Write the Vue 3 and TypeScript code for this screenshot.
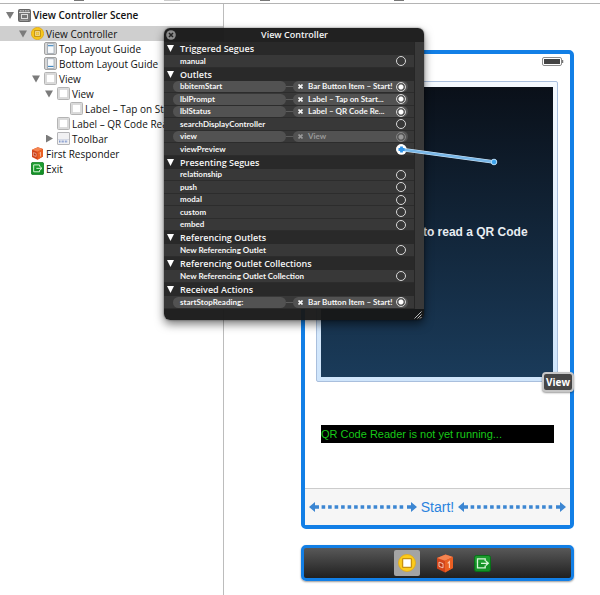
<script setup lang="ts">
type IconName = 'scene' | 'controller' | 'top' | 'bottom' | 'view' | 'toolbar' | 'responder' | 'exit'

interface TreeNode {
  label: string
  icon: IconName
  level: number
  arrow?: 'open' | 'closed'
  selected?: boolean
}

interface Connection {
  name: string
  target?: string
  dimmed?: boolean
  dragging?: boolean
}

interface Section {
  title: string
  items: Connection[]
}

const nodes: TreeNode[] = [
  { label: 'View Controller Scene', icon: 'scene', level: 0, arrow: 'open' },
  { label: 'View Controller', icon: 'controller', level: 1, arrow: 'open', selected: true },
  { label: 'Top Layout Guide', icon: 'top', level: 2 },
  { label: 'Bottom Layout Guide', icon: 'bottom', level: 2 },
  { label: 'View', icon: 'view', level: 2, arrow: 'open' },
  { label: 'View', icon: 'view', level: 3, arrow: 'open' },
  { label: 'Label – Tap on Start', icon: 'view', level: 4 },
  { label: 'Label – QR Code Rea', icon: 'view', level: 3 },
  { label: 'Toolbar', icon: 'toolbar', level: 3, arrow: 'closed' },
  { label: 'First Responder', icon: 'responder', level: 1 },
  { label: 'Exit', icon: 'exit', level: 1 },
]

const sections: Section[] = [
  { title: 'Triggered Segues', items: [{ name: 'manual' }] },
  {
    title: 'Outlets',
    items: [
      { name: 'bbitemStart', target: 'Bar Button Item – Start!' },
      { name: 'lblPrompt', target: 'Label – Tap on Start...' },
      { name: 'lblStatus', target: 'Label – QR Code Re...' },
      { name: 'searchDisplayController' },
      { name: 'view', target: 'View', dimmed: true },
      { name: 'viewPreview', dragging: true },
    ],
  },
  {
    title: 'Presenting Segues',
    items: [
      { name: 'relationship' },
      { name: 'push' },
      { name: 'modal' },
      { name: 'custom' },
      { name: 'embed' },
    ],
  },
  { title: 'Referencing Outlets', items: [{ name: 'New Referencing Outlet' }] },
  { title: 'Referencing Outlet Collections', items: [{ name: 'New Referencing Outlet Collection' }] },
  { title: 'Received Actions', items: [{ name: 'startStopReading:', target: 'Bar Button Item – Start!' }] },
]
</script>

<template>
  <div class="window">
    <svg class="defs" width="0" height="0" aria-hidden="true">
      <symbol id="i-scene" viewBox="0 0 13 13">
        <rect x=".5" y=".5" width="12" height="12" rx="1" fill="#777" stroke="#666" />
        <path d="M1 3.5h11" stroke="#ddd" />
        <path d="M2 1.8h9" stroke="#ccc" stroke-dasharray="1.5 1" />
        <rect x="3.5" y="5.5" width="6" height="4" fill="none" stroke="#ddd" />
        <path d="M2.5 11.3h8" stroke="#ccc" stroke-dasharray="1 1" />
      </symbol>
      <symbol id="i-controller" viewBox="0 0 13 13">
        <circle cx="6.5" cy="6.5" r="6.1" fill="#f7c71c" stroke="#dfa50f" stroke-width=".8" />
        <rect x="3.7" y="3.7" width="5.6" height="5.6" fill="#fff3c0" stroke="#b8860a" stroke-width="1" />
        <rect x="5.1" y="5.1" width="2.8" height="2.8" fill="#f7d450" stroke="#d9a520" stroke-width=".5" />
      </symbol>
      <symbol id="i-top" viewBox="0 0 13 13">
        <rect x=".5" y=".5" width="12" height="12" rx="1.5" fill="#d7d7d7" stroke="#a2a2a2" />
        <rect x="3.5" y="1.8" width="6.5" height="9.5" fill="#f8fafc" stroke="#8f9aa5" stroke-width=".7" />
        <path d="M4 3.7h5.5" stroke="#3c83bd" stroke-width="1.1" />
      </symbol>
      <symbol id="i-bottom" viewBox="0 0 13 13">
        <rect x=".5" y=".5" width="12" height="12" rx="1.5" fill="#d7d7d7" stroke="#a2a2a2" />
        <rect x="3.5" y="1.8" width="6.5" height="9.5" fill="#f8fafc" stroke="#8f9aa5" stroke-width=".7" />
        <path d="M4 9.4h5.5" stroke="#3c83bd" stroke-width="1.1" />
      </symbol>
      <symbol id="i-view" viewBox="0 0 13 13">
        <rect x=".5" y=".5" width="12" height="12" rx="1" fill="#dadada" stroke="#b4b4b4" />
        <rect x="2.5" y="2.5" width="8" height="8" fill="#fff" stroke="#c0c0c0" stroke-width=".8" stroke-dasharray="1 1" />
      </symbol>
      <symbol id="i-toolbar" viewBox="0 0 13 13">
        <rect x=".5" y=".5" width="12" height="12" rx=".5" fill="#f1f1f3" stroke="#b5b5b8" />
        <path d="M1 7.5h11" stroke="#c9cede" stroke-width=".7" />
        <path d="M2 9.5h2.4M5.2 9.5h2.2M8.2 9.5h2.2" stroke="#7f97cc" stroke-width="2" stroke-dasharray="1.5 .5" />
      </symbol>
      <symbol id="i-responder" viewBox="0 0 18 19">
        <path d="M1 4 9.5 .5 17 3v11l-8 4.5L1 14.5z" fill="#d2441a" />
        <path d="M1 4 9.5 .5 17 3 9 6.8z" fill="#f58450" />
        <path d="M9 6.8 17 3v11l-8 4.5z" fill="#ea5f22" />
        <path d="M3 8.2l4 1.4v4.2l-4-1.4z" fill="#b93310" stroke="#f6c3ae" stroke-width="1" />
        <path d="M11.7 9.4l1.7-1.7v6.2" fill="none" stroke="#fbcbb0" stroke-width="1.1" />
      </symbol>
      <symbol id="i-exit" viewBox="0 0 17 17">
        <rect x=".5" y=".5" width="16" height="16" rx="2" fill="#139126" stroke="#087018" />
        <rect x="1" y="1" width="15" height="7" rx="1.5" fill="#28a838" opacity=".5" />
        <path d="M11.2 6V3.8H3.5v9h7.7v-2.2" fill="none" stroke="#d8f5d8" stroke-width="1.3" />
        <path d="M7 8.3h7M11.8 6l2.5 2.3-2.5 2.3" fill="none" stroke="#d8f5d8" stroke-width="1.3" />
      </symbol>
      <symbol id="i-controller-large" viewBox="0 0 18 18">
        <circle cx="9" cy="9" r="8.5" fill="#fccc1d" stroke="#e6aa12" stroke-width=".8" />
        <rect x="4.6" y="4.6" width="8.8" height="8.8" rx=".6" fill="#fff" stroke="#c9920f" stroke-width="1.3" />
      </symbol>
      <symbol id="i-arrow" viewBox="0 0 108 10">
        <path d="M0 5 6 0v3.2h4v3.6H6V10z" fill="#3c86d2" />
        <path d="M12.6 5h84" stroke="#3c86d2" stroke-width="3.6" stroke-dasharray="3.6 2.9" />
        <path d="M108 5l-6-5v3.2h-4v3.6h4V10z" fill="#3c86d2" />
      </symbol>
    </svg>

    <header class="strip">
      <i class="stub"></i><i class="stub pale"></i><i class="stub"></i><i class="stub"></i>
    </header>

    <div class="workspace">
      <nav class="outline" aria-label="Document outline">
        <ul>
          <li
            v-for="(node, n) in nodes"
            :key="n"
            class="node"
            :class="['level-' + node.level, { selected: node.selected }]"
          >
            <button v-if="node.arrow" class="arrow" :class="node.arrow" :aria-label="'Toggle ' + node.label"></button>
            <span v-else class="arrow"></span>
            <svg class="icon"><use :href="'#i-' + node.icon" /></svg>
            <span class="label">{{ node.label }}</span>
          </li>
        </ul>
      </nav>

      <main class="canvas">
        <section class="device" aria-label="View Controller">
          <div class="status-bar">
            <svg width="22" height="9" viewBox="0 0 22 9">
              <rect x=".5" y=".5" width="19" height="8" rx="1.5" fill="#fff" stroke="#8c8c8c" />
              <rect x="2" y="2" width="16" height="5" fill="#444" />
              <path d="M20.5 3v3" stroke="#777" stroke-width="1.5" />
            </svg>
          </div>
          <div class="preview-frame">
            <div class="preview">Tap on Start! to read a QR Code</div>
            <span class="tag">View</span>
          </div>
          <p class="status">QR Code Reader is not yet running...</p>
          <footer class="toolbar">
            <svg class="space"><use href="#i-arrow" /></svg>
            <button class="start">Start!</button>
            <svg class="space"><use href="#i-arrow" /></svg>
          </footer>
        </section>

        <section class="dock" aria-label="Scene dock">
          <button class="slot active" aria-label="View Controller"><svg width="18" height="18"><use href="#i-controller-large" /></svg></button>
          <button class="slot" aria-label="First Responder"><svg width="18" height="19"><use href="#i-responder" /></svg></button>
          <button class="slot" aria-label="Exit"><svg width="17" height="17"><use href="#i-exit" /></svg></button>
        </section>
      </main>
    </div>

    <section class="panel" aria-label="Connections">
      <header class="panel-title">
        <button class="close" aria-label="Close">
          <svg width="10" height="10" viewBox="0 0 10 10">
            <circle cx="5" cy="5" r="4.8" fill="#8b8b8b" />
            <path d="M3 3l4 4M7 3l-4 4" stroke="#222" stroke-width="1.5" />
          </svg>
        </button>
        <h1>View Controller</h1>
      </header>
      <div class="panel-body">
        <div class="list">
          <section v-for="section in sections" :key="section.title">
            <h2><span class="mark"></span>{{ section.title }}</h2>
            <ul>
              <li v-for="item in section.items" :key="item.name" class="item" :class="{ dimmed: item.dimmed }">
                <span class="name" :class="{ pill: item.target }">{{ item.name }}</span>
                <template v-if="item.target">
                  <span class="wire"></span>
                  <span class="target pill">
                    <button class="cut" aria-label="Disconnect">
                      <svg width="5" height="5" viewBox="0 0 5 5"><path d="M.5 .5l4 4M4.5 .5l-4 4" stroke="currentColor" stroke-width="1.6" /></svg>
                    </button>
                    <span>{{ item.target }}</span>
                  </span>
                </template>
                <button
                  class="well"
                  :class="{ filled: item.target, dragging: item.dragging }"
                  :aria-label="'Connect ' + item.name"
                ></button>
              </li>
            </ul>
          </section>
        </div>
        <div class="track"></div>
      </div>
      <footer class="grip">
        <svg width="8" height="8" viewBox="0 0 8 8"><path d="M.5 7.5l7-7M3.5 7.5l4-4M6 7.5l1.5-1.5" stroke="#bbb" /></svg>
      </footer>
      <svg class="drag-line" width="104" height="24" viewBox="0 0 104 24">
        <circle cx="5.5" cy="5.5" r="5.2" fill="#fff" />
        <path d="M6 5.5 98 18" stroke="#d7ebfb" stroke-width="3.6" />
        <path d="M6 5.5 98 18" stroke="#7ab8e8" stroke-width="2.4" />
        <circle cx="98" cy="18" r="2.8" fill="#3ea4ec" stroke="#b9defa" stroke-width="1" />
        <path d="M2.5 5.5h6M5.5 2.5v6" stroke="#2f92e6" stroke-width="2.8" />
      </svg>
    </section>
  </div>
</template>

<style>
body {
  background: #fff;
}
</style>

<style scoped>
.window {
  position: relative;
  display: flex;
  flex-direction: column;
  min-height: 100vh;
  overflow: hidden;
  color: #111;
  font-family: "Open Sans", "Noto Sans", sans-serif;
  font-size: 10px;
}

.window * {
  box-sizing: border-box;
}

.defs {
  position: absolute;
}

ul,
p,
h1,
h2 {
  margin: 0;
  padding: 0;
  list-style: none;
}

button {
  margin: 0;
  padding: 0;
  border: 0;
  background: none;
  color: inherit;
  font: inherit;
}

.strip {
  display: flex;
  gap: 80px;
  height: 4px;
  padding-left: 74px;
  border-bottom: 1px solid #b4b4b4;
}

.stub {
  width: 10px;
  height: 1px;
  background: #777;
}

.stub:nth-child(3) {
  margin-right: 44px;
}

.pale {
  width: 16px;
  background: #ccc;
}

.workspace {
  display: flex;
  flex: 1;
}

.outline {
  flex: 0 0 224px;
  overflow: hidden;
  border-right: 1px solid #bcbcbc;
}

.node {
  display: flex;
  align-items: center;
  height: 15px;
  white-space: nowrap;
}

.level-0 {
  height: 22px;
  padding-left: 6px;
  font-weight: 600;
}

.level-1 {
  padding-left: 19px;
}

.level-2 {
  padding-left: 32px;
}

.level-3 {
  padding-left: 45px;
}

.level-4 {
  padding-left: 58px;
}

.selected {
  background: #cfcfcf;
}

.arrow {
  flex: none;
  width: 8px;
  height: 8px;
  margin-right: 4px;
}

.open {
  background: #7b7b7b;
  clip-path: polygon(0 1px, 100% 1px, 50% 100%);
}

.closed {
  background: #7b7b7b;
  clip-path: polygon(1px 0, 100% 50%, 1px 100%);
}

.icon {
  flex: none;
  width: 13px;
  height: 13px;
  margin-right: 2px;
}

.canvas {
  flex: 1;
  padding: 46px 26px 14px 77px;
}

.device {
  display: flex;
  flex-direction: column;
  border: 4px solid #127fe6;
  border-radius: 5px;
  background: #fff;
}

.status-bar {
  display: flex;
  justify-content: flex-end;
  height: 27px;
  padding: 3px 6px;
}

.preview-frame {
  position: relative;
  margin: 0 12px 0 11px;
  padding: 5px 4px 4px;
  border: 1px solid #a9bfdd;
  border-radius: 2px;
  background: linear-gradient(#f4f9fe, #cfe5fb);
}

.preview {
  display: flex;
  align-items: center;
  justify-content: center;
  height: 290px;
  background: linear-gradient(#0a1019, #1a3b5a);
  color: #e8edf2;
  font: 700 12px "Liberation Sans", Arial, sans-serif;
}

.tag {
  position: absolute;
  right: -17px;
  bottom: -11px;
  padding: 0 2px;
  border: 2px solid #c6c6c6;
  border-radius: 4px;
  background: #464646;
  box-shadow: 0 1px 2px #0006;
  color: #fff;
  font-weight: 700;
  line-height: 16px;
}

.status {
  margin: 43px 16px 45px;
  background: #000;
  color: #18c818;
  font: 11px/18px "Liberation Sans", Arial, sans-serif;
}

.toolbar {
  display: flex;
  align-items: center;
  justify-content: space-between;
  height: 37px;
  padding: 0 4px;
  border-top: 1px solid #ccc;
  background: #f6f6f6;
}

.space {
  width: 108px;
  height: 10px;
}

.start {
  color: #2a83de;
  font: 14px "Liberation Sans", Arial, sans-serif;
}

.dock {
  display: flex;
  align-items: center;
  justify-content: center;
  gap: 12px;
  height: 36px;
  margin-top: 16px;
  padding-left: 14px;
  border: 3px solid #127fe6;
  border-radius: 5px;
  background: linear-gradient(#585858, #202020);
  box-shadow: 0 1px 2px #0006;
}

.slot {
  display: grid;
  place-items: center;
  width: 26px;
  height: 26px;
  border-radius: 2px;
}

.active {
  background: #a4a4a4;
}

.panel {
  position: absolute;
  top: 28px;
  left: 164px;
  width: 260px;
  border-radius: 6px;
  background: #181818f5;
  box-shadow: 0 4px 10px #0008, 0 0 2px #0008;
  color: #f5f5f5;
}

.panel-title {
  display: flex;
  align-items: center;
  height: 14px;
  padding: 0 11px 0 2px;
}

.close {
  display: flex;
}

.panel-title h1 {
  flex: 1;
  font-size: 9px;
  font-weight: 600;
  line-height: 14px;
  text-align: center;
}

.panel-body {
  display: flex;
}

.list {
  flex: 1;
}

.list h2 {
  display: flex;
  align-items: center;
  gap: 6px;
  height: 13px;
  padding-left: 3px;
  background: #292929;
  font-size: 9px;
  font-weight: 600;
  line-height: 13px;
}

.mark {
  width: 7px;
  height: 7px;
  background: #fff;
  clip-path: polygon(0 0, 100% 0, 50% 100%);
}

.item {
  display: flex;
  align-items: center;
  height: 12px;
  padding: 0 7px 0 9px;
  border-bottom: 1px solid #2c2c2c;
  background: #3a3a3af2;
  font-family: Lato, "Open Sans", sans-serif;
  font-size: 8px;
  font-weight: 700;
  line-height: 11px;
  white-space: nowrap;
}

.item:nth-child(even),
.item:only-child {
  height: 13px;
}

.name {
  flex: 1;
  padding-left: 7px;
}

.name.pill {
  flex: 0 0 113px;
}

.pill {
  height: 11px;
  border-radius: 6px;
  background: #525252;
}

.wire {
  width: 7px;
  height: 1px;
  background: #5c5c5c;
}

.target {
  display: flex;
  flex: 1;
  align-items: center;
  gap: 5px;
  margin-right: -12px;
  padding-left: 5px;
}

.cut {
  display: flex;
}

.well {
  flex: none;
  width: 10px;
  height: 10px;
  margin-right: 1px;
  border: 1px solid #d8d8d8;
  border-radius: 50%;
}

.filled {
  background: radial-gradient(circle, #fff 2px, #555 3px);
}

.dragging {
  background: #fff;
}

.dimmed .target,
.dimmed .well {
  color: #999;
}

.dimmed .well {
  border-color: #858585;
  background: radial-gradient(circle, #999 2px, #555 3px);
}

.track {
  width: 10px;
  border-left: 1px solid #262626;
  background: #393939;
}

.grip {
  display: flex;
  align-items: center;
  justify-content: flex-end;
  height: 11px;
  padding: 0 2px;
}

.drag-line {
  position: absolute;
  top: 116px;
  left: 232px;
}
</style>
